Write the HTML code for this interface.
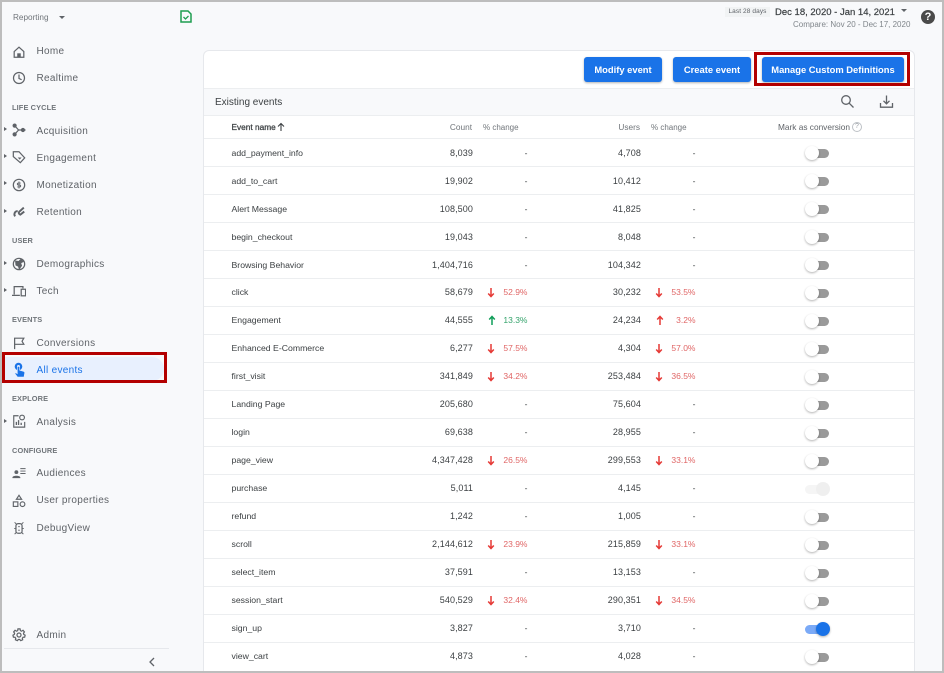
<!DOCTYPE html>
<html><head><meta charset="utf-8"><title>Events</title>
<style>
*{box-sizing:border-box}
html,body{margin:0;padding:0}
body{width:944px;height:673px;overflow:hidden;background:#fff;font-family:"Liberation Sans",sans-serif;position:relative}
#app{position:absolute;left:0;top:0;width:944px;height:673px;background:#f8f9fb;overflow:hidden;filter:blur(.3px)}
#frame{position:absolute;left:0;top:0;width:944px;height:673px;border:2px solid #bdbdbd;z-index:9;pointer-events:none}
.t{position:absolute;white-space:nowrap}
.nav{position:absolute;left:36.5px;font-size:10px;letter-spacing:.3px;color:#5f6368;line-height:14px;white-space:nowrap}
.sec{position:absolute;left:12px;font-size:7.4px;font-weight:bold;letter-spacing:.12px;color:#70757a;line-height:10px;white-space:nowrap}
.ic{position:absolute;left:12px;width:14px;height:14px;fill:none;stroke:#5f6368;stroke-width:1.4}
.tri{position:absolute;left:4px;width:0;height:0;border-left:3px solid #5f6368;border-top:2.5px solid transparent;border-bottom:2.5px solid transparent}
#panel{position:absolute;left:203px;top:50px;width:712px;height:640px;background:#fff;border:1px solid #e6e8ec;border-radius:6px}
.btn{position:absolute;top:57px;height:25px;background:#1a73e8;color:#fff;border-radius:3px;font-size:9.4px;font-weight:bold;text-align:center;line-height:25px;box-shadow:0 1px 2px rgba(60,64,67,.4);white-space:nowrap}
.hl{position:absolute;left:204px;width:710px;height:1px;background:#eceef0}
.n{position:absolute;left:231.5px;font-size:8.7px;color:#3c4043;line-height:12px;white-space:nowrap}
.c,.u,.p,.q{position:absolute;font-size:9px;letter-spacing:.1px;line-height:12px;text-align:right;color:#3c4043;white-space:nowrap}
.c{right:471px}
.u{right:303px}
.p{right:416.5px;color:#e06666;font-size:8.5px;letter-spacing:0}
.q{right:248.5px;color:#e06666;font-size:8.5px;letter-spacing:0}
.g{color:#34a36b}
.d{color:#3c4043}
.ar{position:absolute;width:8px;height:11px}
.tg{position:absolute;left:805px;width:25px;height:16px}
.tr{position:absolute;left:2px;top:4px;width:22px;height:9px;border-radius:4.5px;background:#9a9a9a}
.kn{position:absolute;left:-.5px;top:1px;width:14px;height:14px;border-radius:50%;background:#fff;box-shadow:0 1px 2px rgba(0,0,0,.3)}
.h{position:absolute;top:121px;font-size:8.3px;color:#70757a;line-height:12px;white-space:nowrap}
</style></head><body>
<div id="app">
<div class="t" style="left:13px;top:12px;font-size:8.2px;color:#70757a;line-height:12px">Reporting</div>
<div class="t" style="left:59px;top:16px;width:0;height:0;border-left:3px solid transparent;border-right:3px solid transparent;border-top:3.5px solid #5f6368"></div>
<svg class="t" style="left:180px;top:9.500px" width="12" height="13" viewBox="0 0 12 13" fill="none" stroke="#1e9e50" stroke-width="1.500"><path d="M1 1h7l3 3v8H1z"/><path d="M3.500 7l2 2 3-3" stroke-width="1.300"/></svg>

<svg class="ic" style="top:45px" viewBox="0 0 16 16"><path d="M2.500 7.500L8 2.500l5.500 5V14h-11z"/><path d="M6 14v-4.500h4V14" fill="#5f6368" stroke="none"/></svg>
<div class="nav" style="top:45px">Home</div>
<svg class="ic" style="top:71px" viewBox="0 0 16 16"><circle cx="8" cy="8" r="6.300"/><path d="M8 4v4.500l3 1.500"/></svg>
<div class="nav" style="top:72px">Realtime</div>
<div class="sec" style="top:103px">LIFE CYCLE</div>

<div class="tri" style="top:127px"></div>
<svg class="ic" style="top:123px" viewBox="0 0 16 16"><circle cx="3" cy="3" r="1.700" fill="#5f6368"/><circle cx="3" cy="13" r="1.700" fill="#5f6368"/><circle cx="12.500" cy="8" r="1.700" fill="#5f6368"/><path d="M3 3L7.500 8 3 13M7.500 8h8"/></svg>
<div class="nav" style="top:125px">Acquisition</div>
<div class="tri" style="top:154px"></div>
<svg class="ic" style="top:150px" viewBox="0 0 16 16"><path d="M1.500 2h6.500l6.500 7-5 5.500-8-7z"/><path d="M6.500 8.500h4.500l-2.200 2.500z" fill="#5f6368" stroke="none"/></svg>
<div class="nav" style="top:152px">Engagement</div>
<div class="tri" style="top:181px"></div>
<svg class="ic" style="top:178px" viewBox="0 0 16 16"><circle cx="8" cy="8" r="6.500"/><path d="M10 5.800H7.200a1.100 1.100 0 0 0 0 2.200h1.600a1.100 1.100 0 0 1 0 2.200H6M8 4v8" stroke-width="1.100"/></svg>
<div class="nav" style="top:179px">Monetization</div>
<div class="tri" style="top:209px"></div>
<svg class="ic" style="top:205px;stroke-width:2.200" viewBox="0 0 16 16"><path d="M3.500 13c-2-3 .5-7 3-5.500M13.500 3L8.500 7.500c-1.500 1.500-.5 3 1 3.500L14 7.500"/></svg>
<div class="nav" style="top:206px">Retention</div>
<div class="sec" style="top:236px">USER</div>

<div class="tri" style="top:261px"></div>
<svg class="ic" style="top:257px" viewBox="0 0 16 16"><circle cx="8" cy="8" r="6.500"/><path d="M3.500 4l4 .5 3-3 3 4-3 1.500 1 3-3.500 5-1-4-3-1.500z" fill="#5f6368" stroke="none"/></svg>
<div class="nav" style="top:258px">Demographics</div>
<div class="tri" style="top:288px"></div>
<svg class="ic" style="top:284px" viewBox="0 0 16 16"><path d="M2.500 12V3h10v2M0 13h9"/><rect x="10.500" y="6" width="5" height="7.500"/></svg>
<div class="nav" style="top:285px">Tech</div>
<div class="sec" style="top:315px">EVENTS</div>

<svg class="ic" style="top:336px" viewBox="0 0 16 16"><path d="M3 15V2.500h10.500l-2 3.500 2 3.500H3"/></svg>
<div class="nav" style="top:337px">Conversions</div>
<div class="t" style="left:4px;top:357px;width:160px;height:24px;background:#e8f0fe;border-radius:0 12px 12px 0"></div>
<svg class="t" style="left:13px;top:362px" width="13" height="15" viewBox="0 0 13 15"><circle cx="5.500" cy="4.500" r="3.800" fill="#1a73e8"/><circle cx="5.500" cy="4.500" r="1.500" fill="#e8f0fe"/><path d="M4.300 4.500h2.400v3.800l3.800 1c.8.200 1.300.8 1.200 1.600L11 15H4.500L1.800 11.500l1-.8 1.500 1z" fill="#1a73e8" stroke="#e8f0fe" stroke-width=".6"/></svg>
<div class="nav" style="top:364px;color:#1a73e8">All events</div>
<div class="t" style="left:2px;top:352px;width:165px;height:31px;border:3px solid #b30000"></div>
<div class="sec" style="top:394px">EXPLORE</div>

<div class="tri" style="top:419px"></div>
<svg class="ic" style="top:414px;stroke-width:1.300" viewBox="0 0 16 16"><path d="M7.500 2H2v13h12.500V9"/><circle cx="11.500" cy="4" r="2.700"/><path d="M5 12.500V9M7.500 12.500V7M10.500 12.500V10" stroke-width="1.500"/></svg>
<div class="nav" style="top:416px">Analysis</div>
<div class="sec" style="top:446px">CONFIGURE</div>

<svg class="ic" style="top:466px;stroke-width:1.100" viewBox="0 0 16 16"><circle cx="5" cy="7" r="2.200" fill="#5f6368" stroke="none"/><path d="M0.500 13c.5-2.500 8.500-2.500 9 0v.8h-9z" fill="#5f6368" stroke="none"/><path d="M9.500 3h6M9.500 5.800h6M9.500 8.600h6"/></svg>
<div class="nav" style="top:467px">Audiences</div>
<svg class="ic" style="top:494px;stroke-width:1.300" viewBox="0 0 16 16"><path d="M8 1.500l3 4.500H5z"/><rect x="1.500" y="9" width="5.200" height="5.200"/><circle cx="12" cy="11.600" r="2.700"/></svg>
<div class="nav" style="top:494px">User properties</div>
<svg class="ic" style="top:521px;stroke-width:1.400" viewBox="0 0 16 16"><rect x="4.500" y="3" width="7" height="11" rx="2.500"/><path d="M3 1.500l2 2M13 1.500l-2 2M2.500 8.500h2M11.500 8.500h2M3 15l2-2M13 15l-2-2M7 6.500h2M7 10.500h2" stroke-width="1.100"/></svg>
<div class="nav" style="top:522px">DebugView</div>
<svg class="ic" style="top:628px" viewBox="0 0 16 16"><circle cx="8" cy="8" r="2.300"/><path d="M6.800 1h2.400l.4 2 1.300.6 1.700-1 1.600 1.900-1.100 1.500.4 1.400 1.500.8-.5 2.300-1.800.1-.9 1.100.4 1.800-2.200 1-1.200-1.400H7.300l-1.200 1.400-2.200-1 .4-1.800-.9-1.100-1.800-.1-.5-2.300 1.500-.8.400-1.400-1.100-1.500 1.600-1.900 1.700 1 1.300-.6z"/></svg>
<div class="nav" style="top:629px">Admin</div>
<div class="t" style="left:4px;top:648px;width:165px;height:1px;background:#e6e8ec"></div>
<svg class="t" style="left:148px;top:657px" width="8" height="10" viewBox="0 0 8 10" fill="none" stroke="#5f6368" stroke-width="1.300"><path d="M6 1L2 5l4 4"/></svg>

<div class="t" style="left:725px;top:7px;width:45px;height:10px;background:#f1f3f4;font-size:6.500px;letter-spacing:.1px;color:#5f6368;line-height:10px;text-align:center">Last 28 days</div>
<div class="t" style="left:775px;top:6px;font-size:9.500px;font-weight:normal;color:#3c4043;line-height:13px;-webkit-text-stroke:.2px #3c4043">Dec 18, 2020 - Jan 14, 2021</div>
<div class="t" style="left:901px;top:9px;width:0;height:0;border-left:3px solid transparent;border-right:3px solid transparent;border-top:3.5px solid #5f6368"></div>
<div class="t" style="left:793px;top:19px;font-size:8px;color:#80868b;line-height:12px">Compare: Nov 20 - Dec 17, 2020</div>
<div class="t" style="left:921px;top:10px;width:14px;height:14px;border-radius:50%;background:#4a4a4a;color:#fff;font-size:11px;font-weight:bold;line-height:14px;text-align:center">?</div>

<div id="panel"></div>
<div class="t" style="left:204px;top:88px;width:710px;height:27px;background:#f8f9fb"></div>
<div class="hl" style="top:88px"></div>
<div class="hl" style="top:115px"></div>
<div class="btn" style="left:584px;width:78px">Modify event</div>
<div class="btn" style="left:673px;width:78px">Create event</div>
<div class="btn" style="left:762px;width:142px">Manage Custom Definitions</div>
<div class="t" style="left:754px;top:52px;width:156px;height:34px;border:3px solid #b30000"></div>
<div class="t" style="left:215px;top:96px;font-size:10px;color:#3c4043;line-height:13px">Existing events</div>
<svg class="t" style="left:840px;top:94px" width="15" height="15" viewBox="0 0 15 15" fill="none" stroke="#5f6368" stroke-width="1.300"><circle cx="6" cy="6" r="4.300"/><path d="M9.200 9.200l4.300 4.300"/></svg>
<svg class="t" style="left:879px;top:94px" width="15" height="15" viewBox="0 0 15 15" fill="none" stroke="#5f6368" stroke-width="1.300"><path d="M7.500 1.500v8M4.500 6.800l3 3 3-3M1.500 9v4.200h12V9"/></svg>

<div class="t" style="left:231.500px;top:121px;font-size:8.300px;color:#3c4043;line-height:12px;-webkit-text-stroke:.25px #3c4043">Event name</div>
<svg class="t" style="left:277px;top:122px" width="8" height="10" viewBox="0 0 8 10" fill="none" stroke="#3c4043" stroke-width="1.100"><path d="M4 9V1.500M1 4.500l3-3 3 3"/></svg>
<div class="h" style="right:472px">Count</div>
<div class="h" style="left:483px;top:122px;font-size:8px">% change</div>
<div class="h" style="right:304px">Users</div>
<div class="h" style="left:651px;top:122px;font-size:8px">% change</div>
<div class="h" style="left:778px;color:#5f6368">Mark as conversion</div>
<div class="t" style="left:852px;top:122px;width:10px;height:10px;border:1px solid #bdc1c6;border-radius:50%;font-size:7px;color:#9aa0a6;line-height:8px;text-align:center">?</div>

<div class="hl" style="top:138px"></div><div class="hl" style="top:166px"></div><div class="hl" style="top:194px"></div><div class="hl" style="top:222px"></div><div class="hl" style="top:250px"></div><div class="hl" style="top:278px"></div><div class="hl" style="top:306px"></div><div class="hl" style="top:334px"></div><div class="hl" style="top:362px"></div><div class="hl" style="top:390px"></div><div class="hl" style="top:418px"></div><div class="hl" style="top:446px"></div><div class="hl" style="top:474px"></div><div class="hl" style="top:502px"></div><div class="hl" style="top:530px"></div><div class="hl" style="top:558px"></div><div class="hl" style="top:586px"></div><div class="hl" style="top:614px"></div><div class="hl" style="top:642px"></div>

<div class="n" style="top:147px">add_payment_info</div><div class="c" style="top:147px">8,039</div><div class="p d" style="top:147px">-</div><div class="u" style="top:147px">4,708</div><div class="q d" style="top:147px">-</div>
<div class="tg" style="top:145px"><div class="tr"></div><div class="kn"></div></div>

<div class="n" style="top:175px">add_to_cart</div><div class="c" style="top:175px">19,902</div><div class="p d" style="top:175px">-</div><div class="u" style="top:175px">10,412</div><div class="q d" style="top:175px">-</div>
<div class="tg" style="top:173px"><div class="tr"></div><div class="kn"></div></div>

<div class="n" style="top:203px">Alert Message</div><div class="c" style="top:203px">108,500</div><div class="p d" style="top:203px">-</div><div class="u" style="top:203px">41,825</div><div class="q d" style="top:203px">-</div>
<div class="tg" style="top:201px"><div class="tr"></div><div class="kn"></div></div>

<div class="n" style="top:231px">begin_checkout</div><div class="c" style="top:231px">19,043</div><div class="p d" style="top:231px">-</div><div class="u" style="top:231px">8,048</div><div class="q d" style="top:231px">-</div>
<div class="tg" style="top:229px"><div class="tr"></div><div class="kn"></div></div>

<div class="n" style="top:259px">Browsing Behavior</div><div class="c" style="top:259px">1,404,716</div><div class="p d" style="top:259px">-</div><div class="u" style="top:259px">104,342</div><div class="q d" style="top:259px">-</div>
<div class="tg" style="top:257px"><div class="tr"></div><div class="kn"></div></div>

<div class="n" style="top:286px">click</div><div class="c" style="top:286px">58,679</div>
<svg class="ar" style="left:487px;top:287px" viewBox="0 0 8 11" fill="none" stroke="#e53935" stroke-width="1.500"><path d="M4 1v8.500M1.200 6.500L4 9.500l2.800-3"/></svg><div class="p" style="top:286px">52.9%</div><div class="u" style="top:286px">30,232</div>
<svg class="ar" style="left:655px;top:287px" viewBox="0 0 8 11" fill="none" stroke="#e53935" stroke-width="1.500"><path d="M4 1v8.500M1.200 6.500L4 9.500l2.800-3"/></svg><div class="q" style="top:286px">53.5%</div>
<div class="tg" style="top:285px"><div class="tr"></div><div class="kn"></div></div>

<div class="n" style="top:314px">Engagement</div><div class="c" style="top:314px">44,555</div>
<svg class="ar" style="left:488px;top:315px" viewBox="0 0 8 11" fill="none" stroke="#0f9d58" stroke-width="1.500"><path d="M4 10V1.500M1.200 4.500L4 1.500l2.800 3"/></svg><div class="p g" style="top:314px">13.3%</div><div class="u" style="top:314px">24,234</div>
<svg class="ar" style="left:656px;top:315px" viewBox="0 0 8 11" fill="none" stroke="#e53935" stroke-width="1.500"><path d="M4 10V1.500M1.200 4.500L4 1.500l2.800 3"/></svg><div class="q" style="top:314px">3.2%</div>
<div class="tg" style="top:313px"><div class="tr"></div><div class="kn"></div></div>

<div class="n" style="top:342px">Enhanced E-Commerce</div><div class="c" style="top:342px">6,277</div>
<svg class="ar" style="left:487px;top:343px" viewBox="0 0 8 11" fill="none" stroke="#e53935" stroke-width="1.500"><path d="M4 1v8.500M1.200 6.500L4 9.500l2.800-3"/></svg><div class="p" style="top:342px">57.5%</div><div class="u" style="top:342px">4,304</div>
<svg class="ar" style="left:655px;top:343px" viewBox="0 0 8 11" fill="none" stroke="#e53935" stroke-width="1.500"><path d="M4 1v8.500M1.200 6.500L4 9.500l2.800-3"/></svg><div class="q" style="top:342px">57.0%</div>
<div class="tg" style="top:341px"><div class="tr"></div><div class="kn"></div></div>

<div class="n" style="top:370px">first_visit</div><div class="c" style="top:370px">341,849</div>
<svg class="ar" style="left:487px;top:371px" viewBox="0 0 8 11" fill="none" stroke="#e53935" stroke-width="1.500"><path d="M4 1v8.500M1.200 6.500L4 9.500l2.800-3"/></svg><div class="p" style="top:370px">34.2%</div><div class="u" style="top:370px">253,484</div>
<svg class="ar" style="left:655px;top:371px" viewBox="0 0 8 11" fill="none" stroke="#e53935" stroke-width="1.500"><path d="M4 1v8.500M1.200 6.500L4 9.500l2.800-3"/></svg><div class="q" style="top:370px">36.5%</div>
<div class="tg" style="top:369px"><div class="tr"></div><div class="kn"></div></div>

<div class="n" style="top:398px">Landing Page</div><div class="c" style="top:398px">205,680</div><div class="p d" style="top:398px">-</div><div class="u" style="top:398px">75,604</div><div class="q d" style="top:398px">-</div>
<div class="tg" style="top:397px"><div class="tr"></div><div class="kn"></div></div>

<div class="n" style="top:426px">login</div><div class="c" style="top:426px">69,638</div><div class="p d" style="top:426px">-</div><div class="u" style="top:426px">28,955</div><div class="q d" style="top:426px">-</div>
<div class="tg" style="top:425px"><div class="tr"></div><div class="kn"></div></div>

<div class="n" style="top:454px">page_view</div><div class="c" style="top:454px">4,347,428</div>
<svg class="ar" style="left:487px;top:455px" viewBox="0 0 8 11" fill="none" stroke="#e53935" stroke-width="1.500"><path d="M4 1v8.500M1.200 6.500L4 9.500l2.800-3"/></svg><div class="p" style="top:454px">26.5%</div><div class="u" style="top:454px">299,553</div>
<svg class="ar" style="left:655px;top:455px" viewBox="0 0 8 11" fill="none" stroke="#e53935" stroke-width="1.500"><path d="M4 1v8.500M1.200 6.500L4 9.500l2.800-3"/></svg><div class="q" style="top:454px">33.1%</div>
<div class="tg" style="top:453px"><div class="tr"></div><div class="kn"></div></div>

<div class="n" style="top:482px">purchase</div><div class="c" style="top:482px">5,011</div><div class="p d" style="top:482px">-</div><div class="u" style="top:482px">4,145</div><div class="q d" style="top:482px">-</div>
<div class="tg" style="top:481px"><div class="tr" style="left:0;background:#f5f5f5"></div><div class="kn" style="left:10.500px;background:#efefef;box-shadow:none"></div></div>

<div class="n" style="top:510px">refund</div><div class="c" style="top:510px">1,242</div><div class="p d" style="top:510px">-</div><div class="u" style="top:510px">1,005</div><div class="q d" style="top:510px">-</div>
<div class="tg" style="top:509px"><div class="tr"></div><div class="kn"></div></div>

<div class="n" style="top:538px">scroll</div><div class="c" style="top:538px">2,144,612</div>
<svg class="ar" style="left:487px;top:539px" viewBox="0 0 8 11" fill="none" stroke="#e53935" stroke-width="1.500"><path d="M4 1v8.500M1.200 6.500L4 9.500l2.800-3"/></svg><div class="p" style="top:538px">23.9%</div><div class="u" style="top:538px">215,859</div>
<svg class="ar" style="left:655px;top:539px" viewBox="0 0 8 11" fill="none" stroke="#e53935" stroke-width="1.500"><path d="M4 1v8.500M1.200 6.500L4 9.500l2.800-3"/></svg><div class="q" style="top:538px">33.1%</div>
<div class="tg" style="top:537px"><div class="tr"></div><div class="kn"></div></div>

<div class="n" style="top:566px">select_item</div><div class="c" style="top:566px">37,591</div><div class="p d" style="top:566px">-</div><div class="u" style="top:566px">13,153</div><div class="q d" style="top:566px">-</div>
<div class="tg" style="top:565px"><div class="tr"></div><div class="kn"></div></div>

<div class="n" style="top:594px">session_start</div><div class="c" style="top:594px">540,529</div>
<svg class="ar" style="left:487px;top:595px" viewBox="0 0 8 11" fill="none" stroke="#e53935" stroke-width="1.500"><path d="M4 1v8.500M1.200 6.500L4 9.500l2.800-3"/></svg><div class="p" style="top:594px">32.4%</div><div class="u" style="top:594px">290,351</div>
<svg class="ar" style="left:655px;top:595px" viewBox="0 0 8 11" fill="none" stroke="#e53935" stroke-width="1.500"><path d="M4 1v8.500M1.200 6.500L4 9.500l2.800-3"/></svg><div class="q" style="top:594px">34.5%</div>
<div class="tg" style="top:593px"><div class="tr"></div><div class="kn"></div></div>

<div class="n" style="top:622px">sign_up</div><div class="c" style="top:622px">3,827</div><div class="p d" style="top:622px">-</div><div class="u" style="top:622px">3,710</div><div class="q d" style="top:622px">-</div>
<div class="tg" style="top:621px"><div class="tr" style="left:0;background:#7baaf7"></div><div class="kn" style="left:10.500px;background:#1a73e8"></div></div>

<div class="n" style="top:650px">view_cart</div><div class="c" style="top:650px">4,873</div><div class="p d" style="top:650px">-</div><div class="u" style="top:650px">4,028</div><div class="q d" style="top:650px">-</div>
<div class="tg" style="top:649px"><div class="tr"></div><div class="kn"></div></div>
</div>
<div id="frame"></div>
</body></html>
